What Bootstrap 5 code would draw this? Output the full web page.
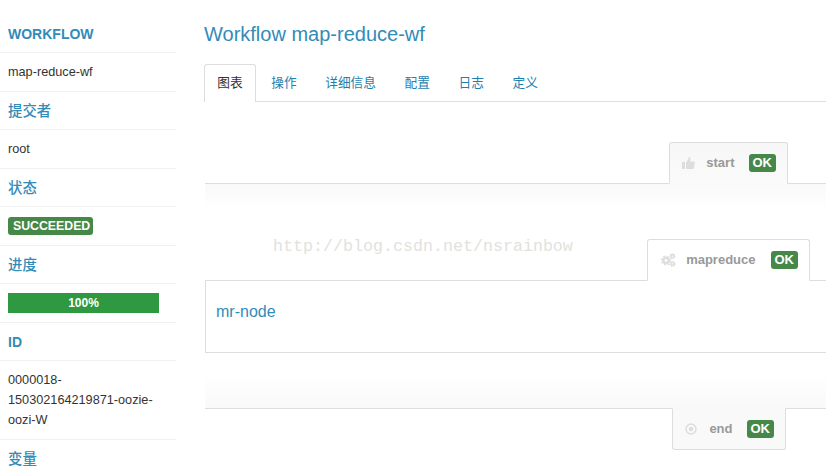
<!DOCTYPE html>
<html lang="zh-CN">
<head>
<meta charset="utf-8">
<title>Workflow map-reduce-wf</title>
<link rel="stylesheet" href="https://cdn.jsdelivr.net/npm/bootstrap@5.3.0/dist/css/bootstrap.min.css">
<style>
html,body{height:472px;overflow:hidden}
body{background:#fff;color:#333;font-family:"Liberation Sans","Noto Sans CJK SC",sans-serif;font-size:12.7px;line-height:20px}
.shell{height:472px;overflow:hidden}
.side{width:176px;flex:none;margin:14.5px 0 0 0;padding:0;list-style:none}
.side li{padding:9px 8px;height:38.5px;border-bottom:1px solid #f1f1f1;line-height:20px}
.side li.tall{height:79px}
.side li.head{color:#338bb8;font-size:14px;font-weight:700}
.side li.zh{font-size:14.4px;font-weight:500}
.side li.last{border-bottom:0}
.state{display:block;background:#468847;color:#fff;font-weight:700;font-size:12.3px;line-height:14px;padding:2px 0 2px 5px;border-radius:3px;width:85px;white-space:nowrap;margin-top:1px}
.meter{background:#2e9940;color:#fff;font-weight:700;font-size:12px;line-height:20px;height:20px;width:151px;text-align:center}
.mainp{width:622px;flex:none;margin-left:28px;padding-top:14px;overflow:hidden}
.ttl{font-size:20px;line-height:40px;color:#338bb8;font-weight:400;margin:0 0 10px 0}
.tabsx{height:38px;border-bottom:1px solid #ddd;display:flex;list-style:none;padding:0;margin:0;font-size:12.7px}
.tabsx li{padding:8px 13.3px;height:37px;color:#1f7fae;border:1px solid transparent;border-bottom:0}
.tabsx li.on{color:#333;border-color:#ddd;background:#fff;height:38px;padding:8px 12.3px;border-radius:3px 3px 0 0;margin-right:1px}
.graph{margin-left:1px}
.band{border-top:1px solid #ddd;height:27px;background:linear-gradient(#f9f9f9,#fff)}
.band.rev{border-top:0;border-bottom:1px solid #ddd;height:34px;background:linear-gradient(#fff,#f9f9f9)}
.nodetab{height:42px;border:1px solid #ddd;border-radius:3px 3px 0 0;display:flex;align-items:center;font-weight:700;font-size:13px;color:#999;margin-bottom:-1px;position:relative;z-index:1}
.nodetab.t1{width:119px;margin-right:38px;padding-left:12px;background:linear-gradient(#f7f7f7,#fafafa);border-bottom-color:#fafafa}
.nodetab.t2{width:163px;margin-right:16px;padding-left:13px;background:#fff;border-bottom-color:#fff}
.nodetab.t3{width:114px;margin-right:40px;padding-left:12px;margin-top:-1px;margin-bottom:0;background:#f9f9f9;border-top-color:#f9f9f9;border-radius:0 0 3px 3px}
.ok{background:#468847;color:#fff;font-size:13px;font-weight:700;line-height:14px;padding:2px 4px;border-radius:3px}
.ic{flex:none;display:block}
.wmk{height:29px;position:relative}
.wmk span{position:absolute;left:68px;top:27px;font-family:"Liberation Mono",monospace;font-size:16.67px;line-height:20px;color:#e2e2de;white-space:nowrap}
.boxx{height:73px;border:1px solid #ddd;border-right:0;padding:21px 10px;font-size:16px;color:#338bb8}
.gap1{height:22px}
.top1{height:40px}
.nm1{margin-right:14px}.nm2{margin-right:15px}.nm3{margin-right:14px}.ok1{margin-right:11px}.ok3{margin-right:11px}
</style>
</head>
<body>
<div class="shell d-flex">
  <ul class="side">
    <li class="head">WORKFLOW</li>
    <li>map-reduce-wf</li>
    <li class="head zh">提交者</li>
    <li>root</li>
    <li class="head zh">状态</li>
    <li><span class="state">SUCCEEDED</span></li>
    <li class="head zh">进度</li>
    <li><div class="meter">100%</div></li>
    <li class="head">ID</li>
    <li class="tall">0000018-<br>150302164219871-oozie-<br>oozi-W</li>
    <li class="head zh last">变量</li>
  </ul>
  <div class="mainp">
    <h1 class="ttl">Workflow map-reduce-wf</h1>
    <ul class="tabsx">
      <li class="on">图表</li><li>操作</li><li>详细信息</li><li>配置</li><li>日志</li><li>定义</li>
    </ul>
    <div class="graph">
    <div class="top1"></div>
    <div class="d-flex justify-content-end">
      <div class="nodetab t1">
        <svg class="ic" width="13" height="12" viewBox="0 0 13 12"><path fill="#ddd" d="M0 5h3v7H0zM4 5.2 6.3 2.6 6.6 0c1.3 0 2 .9 2 2.1 0 .8-.3 1.6-.6 2.3h3.6c.8 0 1.3.6 1.2 1.3l-.8 5c-.1.7-.6 1.3-1.4 1.3H5.5c-.6 0-1-.3-1.5-.6z"/></svg>
        <span class="ms-auto nm1">start</span>
        <span class="ok ok1">OK</span>
      </div>
    </div>
    <div class="band"></div>
    <div class="wmk"><span>http://blog.csdn.net/nsrainbow</span></div>
    <div class="d-flex justify-content-end">
      <div class="nodetab t2">
        <svg class="ic" width="15" height="14" viewBox="0 0 15 14"><g fill="none" stroke="#ddd"><circle cx="5" cy="7.5" r="2.6" stroke-width="2.4"/><circle cx="5" cy="7.5" r="4.3" stroke-width="1.6" stroke-dasharray="1.7 1.7"/><circle cx="11.5" cy="3.2" r="1.6" stroke-width="1.6"/><circle cx="11.5" cy="3.2" r="2.8" stroke-width="1" stroke-dasharray="1.2 1.2"/><circle cx="11.5" cy="10.8" r="1.6" stroke-width="1.6"/><circle cx="11.5" cy="10.8" r="2.8" stroke-width="1" stroke-dasharray="1.2 1.2"/></g></svg>
        <span class="ms-auto nm2">mapreduce</span>
        <span class="ok ok1">OK</span>
      </div>
    </div>
    <div class="boxx">mr-node</div>
    <div class="gap1"></div>
    <div class="band rev"></div>
    <div class="d-flex justify-content-end">
      <div class="nodetab t3">
        <svg class="ic" width="12" height="12" viewBox="0 0 12 12"><circle cx="6" cy="6" r="5" fill="none" stroke="#ddd" stroke-width="1.5"/><circle cx="6" cy="6" r="2.2" fill="#ddd"/></svg>
        <span class="ms-auto nm3">end</span>
        <span class="ok ok3">OK</span>
      </div>
    </div>
    </div>
  </div>
</div>
<script src="https://cdn.jsdelivr.net/npm/bootstrap@5.3.0/dist/js/bootstrap.bundle.min.js"></script>
</body>
</html>
